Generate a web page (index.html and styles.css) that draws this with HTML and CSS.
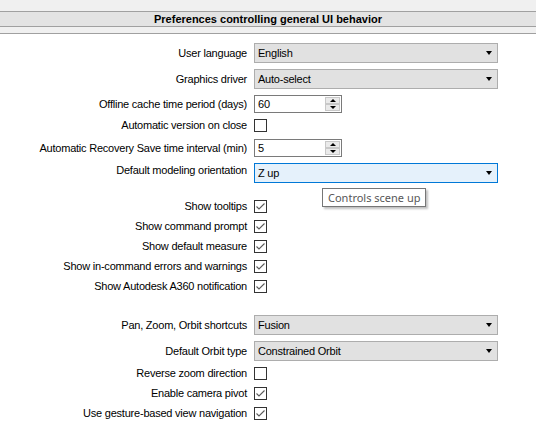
FILE: index.html
```html
<!DOCTYPE html>
<html>
<head>
<meta charset="utf-8">
<link rel="stylesheet" href="styles.css">
</head>
<body>
<div class="page">
  <div class="header">
    <div class="band-top"></div>
    <div class="title">Preferences controlling general UI behavior</div>
    <div class="band-bottom"></div>
  </div>
  <div class="form">
    <div class="group">
      <div class="row"><span class="label">User language</span><div class="select"><span>English</span><span class="arrow"></span></div></div>
      <div class="row"><span class="label">Graphics driver</span><div class="select"><span>Auto-select</span><span class="arrow"></span></div></div>
      <div class="row"><span class="label">Offline cache time period (days)</span><div class="spin"><span class="spin-val">60</span><div class="spin-btns"><span class="sb up"></span><span class="sb down"></span></div></div></div>
      <div class="row cbrow"><span class="label">Automatic version on close</span><span class="check"></span></div>
      <div class="row"><span class="label">Automatic Recovery Save time interval (min)</span><div class="spin"><span class="spin-val">5</span><div class="spin-btns"><span class="sb up"></span><span class="sb down"></span></div></div></div>
      <div class="row"><span class="label label-high">Default modeling orientation</span><div class="select focused"><span>Z up</span><span class="arrow"></span></div></div>
    </div>
    <div class="group">
      <div class="row cbrow"><span class="label">Show tooltips</span><span class="check on"><svg viewBox="0 0 13 13" width="13" height="13"><polyline points="2.5,6.5 5,9 10.5,3.5" /></svg></span></div>
      <div class="row cbrow"><span class="label">Show command prompt</span><span class="check on"><svg viewBox="0 0 13 13" width="13" height="13"><polyline points="2.5,6.5 5,9 10.5,3.5" /></svg></span></div>
      <div class="row cbrow"><span class="label">Show default measure</span><span class="check on"><svg viewBox="0 0 13 13" width="13" height="13"><polyline points="2.5,6.5 5,9 10.5,3.5" /></svg></span></div>
      <div class="row cbrow"><span class="label">Show in-command errors and warnings</span><span class="check on"><svg viewBox="0 0 13 13" width="13" height="13"><polyline points="2.5,6.5 5,9 10.5,3.5" /></svg></span></div>
      <div class="row cbrow"><span class="label">Show Autodesk A360 notification</span><span class="check on"><svg viewBox="0 0 13 13" width="13" height="13"><polyline points="2.5,6.5 5,9 10.5,3.5" /></svg></span></div>
    </div>
    <div class="group group-last">
      <div class="row"><span class="label">Pan, Zoom, Orbit shortcuts</span><div class="select"><span>Fusion</span><span class="arrow"></span></div></div>
      <div class="row"><span class="label">Default Orbit type</span><div class="select"><span>Constrained Orbit</span><span class="arrow"></span></div></div>
      <div class="row cbrow"><span class="label">Reverse zoom direction</span><span class="check"></span></div>
      <div class="row cbrow"><span class="label">Enable camera pivot</span><span class="check on"><svg viewBox="0 0 13 13" width="13" height="13"><polyline points="2.5,6.5 5,9 10.5,3.5" /></svg></span></div>
      <div class="row cbrow"><span class="label">Use gesture-based view navigation</span><span class="check on"><svg viewBox="0 0 13 13" width="13" height="13"><polyline points="2.5,6.5 5,9 10.5,3.5" /></svg></span></div>
    </div>
  </div>
  <div class="tooltip">Controls scene up</div>
</div>
</body>
</html>
```

FILE: styles.css
```css
html, body {
  margin: 0;
  padding: 0;
  background: #ffffff;
}

.page {
  position: relative;
  width: 536px;
  height: 433px;
  overflow: hidden;
  font-family: "Liberation Sans", Arial, sans-serif;
  font-size: 11px;
  letter-spacing: -0.22px;
  color: #000000;
}

.band-top {
  height: 11px;
  background: #f0f0f0;
  border-bottom: 1px solid #a0a0a0;
}

.title {
  height: 14px;
  line-height: 14px;
  background: #e3e3e3;
  text-align: center;
  font-weight: bold;
  font-size: 11px;
  letter-spacing: 0;
}

.band-bottom {
  height: 6px;
  background: #f0f0f0;
  border-top: 1px solid #a0a0a0;
  border-bottom: 1px solid #a0a0a0;
}

.form {
  padding-top: 9px;
  display: flex;
  flex-direction: column;
  gap: 17px;
}

.group {
  display: flex;
  flex-direction: column;
  gap: 6px;
}

.group-last {
  margin-top: 4px;
}

.row {
  display: grid;
  grid-template-columns: 247px auto;
  column-gap: 7px;
  align-items: center;
  justify-items: start;
}

.cbrow {
  height: 14px;
  align-items: start;
}

.label {
  justify-self: end;
  white-space: nowrap;
  line-height: 13px;
}

.label-high {
  align-self: start;
  margin-top: 1px;
}

.select {
  box-sizing: border-box;
  width: 244px;
  height: 20px;
  background: #e1e1e1;
  border: 1px solid #adadad;
  display: flex;
  align-items: center;
  justify-content: space-between;
  padding: 0 5px 0 3px;
}

.select.focused {
  background: #e5f1fb;
  border-color: #0078d7;
}

.arrow {
  width: 0;
  height: 0;
  border-left: 3.5px solid transparent;
  border-right: 3.5px solid transparent;
  border-top: 4px solid #000000;
}

.spin {
  box-sizing: border-box;
  width: 88px;
  height: 18px;
  background: #ffffff;
  border: 1px solid #7a7a7a;
  display: flex;
  align-items: center;
  justify-content: space-between;
  padding: 0 1px 0 3px;
}

.spin-btns {
  display: flex;
  flex-direction: column;
  width: 15px;
  height: 14px;
}

.sb {
  box-sizing: border-box;
  flex: 1;
  background: #eaeaea;
  border: 1px solid #c8c8c8;
  display: flex;
  align-items: center;
  justify-content: center;
}

.sb.up::after {
  content: "";
  border-left: 3px solid transparent;
  border-right: 3px solid transparent;
  border-bottom: 3px solid #000000;
}

.sb.down::after {
  content: "";
  border-left: 3px solid transparent;
  border-right: 3px solid transparent;
  border-top: 3px solid #000000;
}

.check {
  box-sizing: border-box;
  width: 13px;
  height: 13px;
  border: 1px solid #333333;
  background: #ffffff;
  position: relative;
}

.check svg {
  position: absolute;
  left: -1px;
  top: -1px;
}

.check polyline {
  fill: none;
  stroke: #5a5a5a;
  stroke-width: 1.1;
}

.tooltip {
  position: absolute;
  left: 322px;
  top: 188px;
  box-sizing: border-box;
  width: 104px;
  height: 19px;
  line-height: 17px;
  border: 1px solid #767676;
  background: #ffffff;
  color: #575757;
  font-family: "Noto Sans", "Open Sans", sans-serif;
  font-size: 11px;
  letter-spacing: 0;
  padding-left: 5px;
  box-shadow: 2px 2px 2px rgba(0, 0, 0, 0.25);
}
```
